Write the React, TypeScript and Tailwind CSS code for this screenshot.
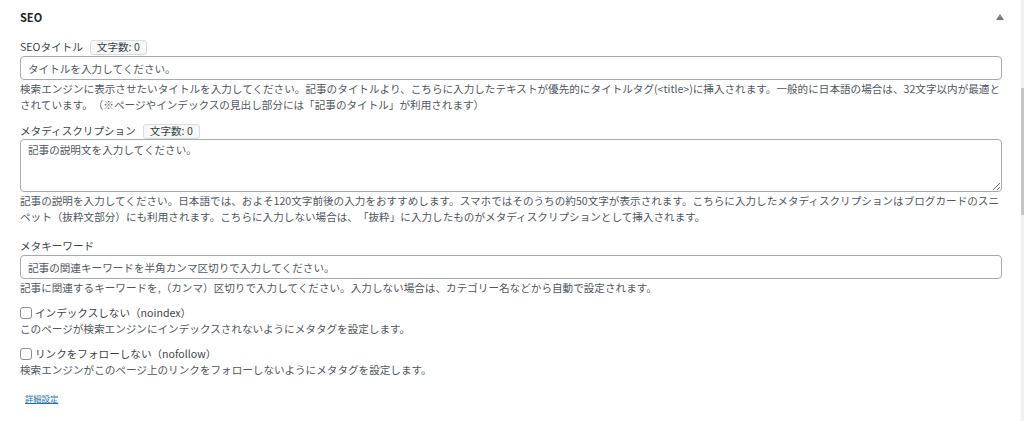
import { useState } from 'react'

const FONT = { fontFamily: '"Noto Sans CJK JP", "Noto Sans", sans-serif' }

function CountBadge({ count }: { count: number }) {
  return (
    <span className="ml-[7px] inline-flex h-[15px] items-center rounded-[3px] border border-[#dcdcde] bg-[#f6f7f7] px-[6px] text-[10.6px] leading-none text-[#3c434a]">
      文字数: {count}
    </span>
  )
}

function Help({ children }: { children: React.ReactNode }) {
  return <p className="text-[10.6px] leading-[15.5px] text-[#50575e]">{children}</p>
}

function Check({ label, help }: { label: string; help: string }) {
  const [checked, setChecked] = useState(false)
  return (
    <div>
      <label className="flex h-[16px] items-center text-[10.6px] text-[#3c434a]">
        <input
          type="checkbox"
          checked={checked}
          onChange={() => setChecked(!checked)}
          className="mr-[3px] h-[12px] w-[12px] appearance-none rounded-[3px] border border-[#8c8f94] bg-white"
        />
        {label}
      </label>
      <Help>{help}</Help>
    </div>
  )
}

export default function App() {
  const [title, setTitle] = useState('')
  const [desc, setDesc] = useState('')
  const [keywords, setKeywords] = useState('')

  return (
    <div className="flex h-[421px] w-[1024px] bg-white [text-spacing-trim:space-all]" style={FONT}>
      <div className="flex-1 pl-[20px] pr-[19px]">
        {/* header */}
        <div className="flex h-[34px] items-center justify-between">
          <h2 className="text-[11px] font-bold text-[#1d2327]">SEO</h2>
          <svg width="8" height="6" viewBox="0 0 8 6" className="mr-[-2px] mb-[1px]">
            <path d="M4 0 L8 6 L0 6 Z" fill="#787c82" />
          </svg>
        </div>

        {/* title */}
        <div className="mt-[5px] flex h-[16px] items-center text-[10.6px] text-[#3c434a]">
          SEOタイトル
          <CountBadge count={title.length} />
        </div>
        <input
          value={title}
          onChange={e => setTitle(e.target.value)}
          placeholder="タイトルを入力してください。"
          className="mt-[1px] block h-[24px] w-full rounded-[4px] border border-[#a7aaad] px-[7px] text-[10.6px] text-[#2c3338] outline-none placeholder:text-[#50575e]"
        />
        <div className="mt-[1px]">
          <Help>
            検索エンジンに表示させたいタイトルを入力してください。記事のタイトルより、こちらに入力したテキストが優先的にタイトルタグ(&lt;title&gt;)に挿入されます。一般的に日本語の場合は、32文字以内が最適とされています。（※ページやインデックスの見出し部分には「記事のタイトル」が利用されます）
          </Help>
        </div>

        {/* description */}
        <div className="mt-[11px] flex h-[16px] items-center text-[10.6px] text-[#3c434a]">
          メタディスクリプション
          <CountBadge count={desc.length} />
        </div>
        <textarea
          value={desc}
          onChange={e => setDesc(e.target.value)}
          placeholder="記事の説明文を入力してください。"
          className="block h-[53px] w-full rounded-[4px] border border-[#a7aaad] px-[7px] py-[2px] text-[10.6px] leading-[15px] text-[#2c3338] outline-none placeholder:text-[#50575e]"
        />
        <div className="mt-[1px]">
          <Help>
            記事の説明を入力してください。日本語では、およそ120文字前後の入力をおすすめします。スマホではそのうちの約50文字が表示されます。こちらに入力したメタディスクリプションはブログカードのスニペット（抜粋文部分）にも利用されます。こちらに入力しない場合は、「抜粋」に入力したものがメタディスクリプションとして挿入されます。
          </Help>
        </div>

        {/* keywords */}
        <div className="mt-[14px] flex h-[16px] items-center text-[10.6px] text-[#3c434a]">メタキーワード</div>
        <input
          value={keywords}
          onChange={e => setKeywords(e.target.value)}
          placeholder="記事の関連キーワードを半角カンマ区切りで入力してください。"
          className="mt-[1px] block h-[24px] w-full rounded-[4px] border border-[#a7aaad] px-[7px] text-[10.6px] text-[#2c3338] outline-none placeholder:text-[#50575e]"
        />
        <div className="mt-[1px]">
          <Help>記事に関連するキーワードを,（カンマ）区切りで入力してください。入力しない場合は、カテゴリー名などから自動で設定されます。</Help>
        </div>

        <div className="mt-[9px]">
          <Check label="インデックスしない（noindex）" help="このページが検索エンジンにインデックスされないようにメタタグを設定します。" />
        </div>
        <div className="mt-[10px]">
          <Check label="リンクをフォローしない（nofollow）" help="検索エンジンがこのページ上のリンクをフォローしないようにメタタグを設定します。" />
        </div>

        <div className="mt-[5px] pl-[5px]">
          <a href="#" className="text-[8.3px] text-[#2271b1] underline">
            詳細設定
          </a>
        </div>
      </div>

      {/* page scrollbar */}
      <div className="flex w-[3px] flex-col bg-[#f0f0f1]">
        <div className="h-[88px]" />
        <div className="h-[127px] bg-[#c3c4c7]" />
      </div>
    </div>
  )
}
